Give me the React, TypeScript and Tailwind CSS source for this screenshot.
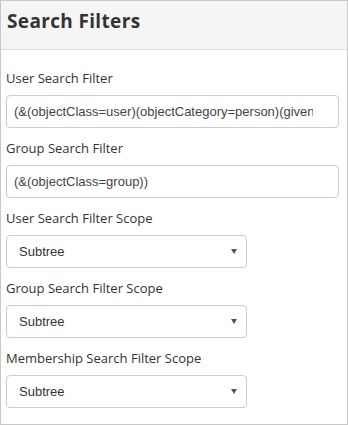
import React from "react";

const Label = ({ children }: { children: React.ReactNode }) => (
  <div className="text-[13px] leading-[20px] text-[#333] mb-[7px]">{children}</div>
);

const Select = () => (
  <div className="relative w-[241px] h-[33px] border border-[#ccc] rounded-[4px] bg-white flex items-center pl-[12px] text-[13px] text-[#333] font-['Liberation_Sans',Arial,sans-serif]">
    <span>Subtree</span>
    <svg className="absolute right-[9px] top-[13px]" width="6" height="5" viewBox="0 0 6 5">
      <path d="M0 0 H6 L3 5 Z" fill="#555" />
    </svg>
  </div>
);

const TextBox = ({ value }: { value: string }) => (
  <div className="w-[333px] h-[33px] border border-[#ccc] rounded-[4px] pl-[7px] pr-[25px] flex items-center text-[13px] text-[#444] font-['Liberation_Sans',Arial,sans-serif]">
    <span className="block overflow-hidden whitespace-nowrap">{value}</span>
  </div>
);

export default function App() {
  return (
    <div className="w-[348px] h-[425px] border border-[#c8c8c8] bg-white font-['Open_Sans',sans-serif] overflow-hidden">
      <div className="h-[49px] bg-[#f5f5f5] border-b border-[#ddd] px-[6px] pt-[6px]">
        <h1 className="text-[19px] leading-[28px] font-bold tracking-[0.35px] text-[#333]">Search Filters</h1>
      </div>
      <div className="px-[5px] pt-[18px]">
        <div className="mb-[10px]">
          <Label>User Search Filter</Label>
          <TextBox value="(&(objectClass=user)(objectCategory=person)(givenName=*))" />
        </div>
        <div className="mb-[10px]">
          <Label>Group Search Filter</Label>
          <TextBox value="(&(objectClass=group))" />
        </div>
        <div className="mb-[10px]">
          <Label>User Search Filter Scope</Label>
          <Select />
        </div>
        <div className="mb-[10px]">
          <Label>Group Search Filter Scope</Label>
          <Select />
        </div>
        <div>
          <Label>Membership Search Filter Scope</Label>
          <Select />
        </div>
      </div>
    </div>
  );
}
